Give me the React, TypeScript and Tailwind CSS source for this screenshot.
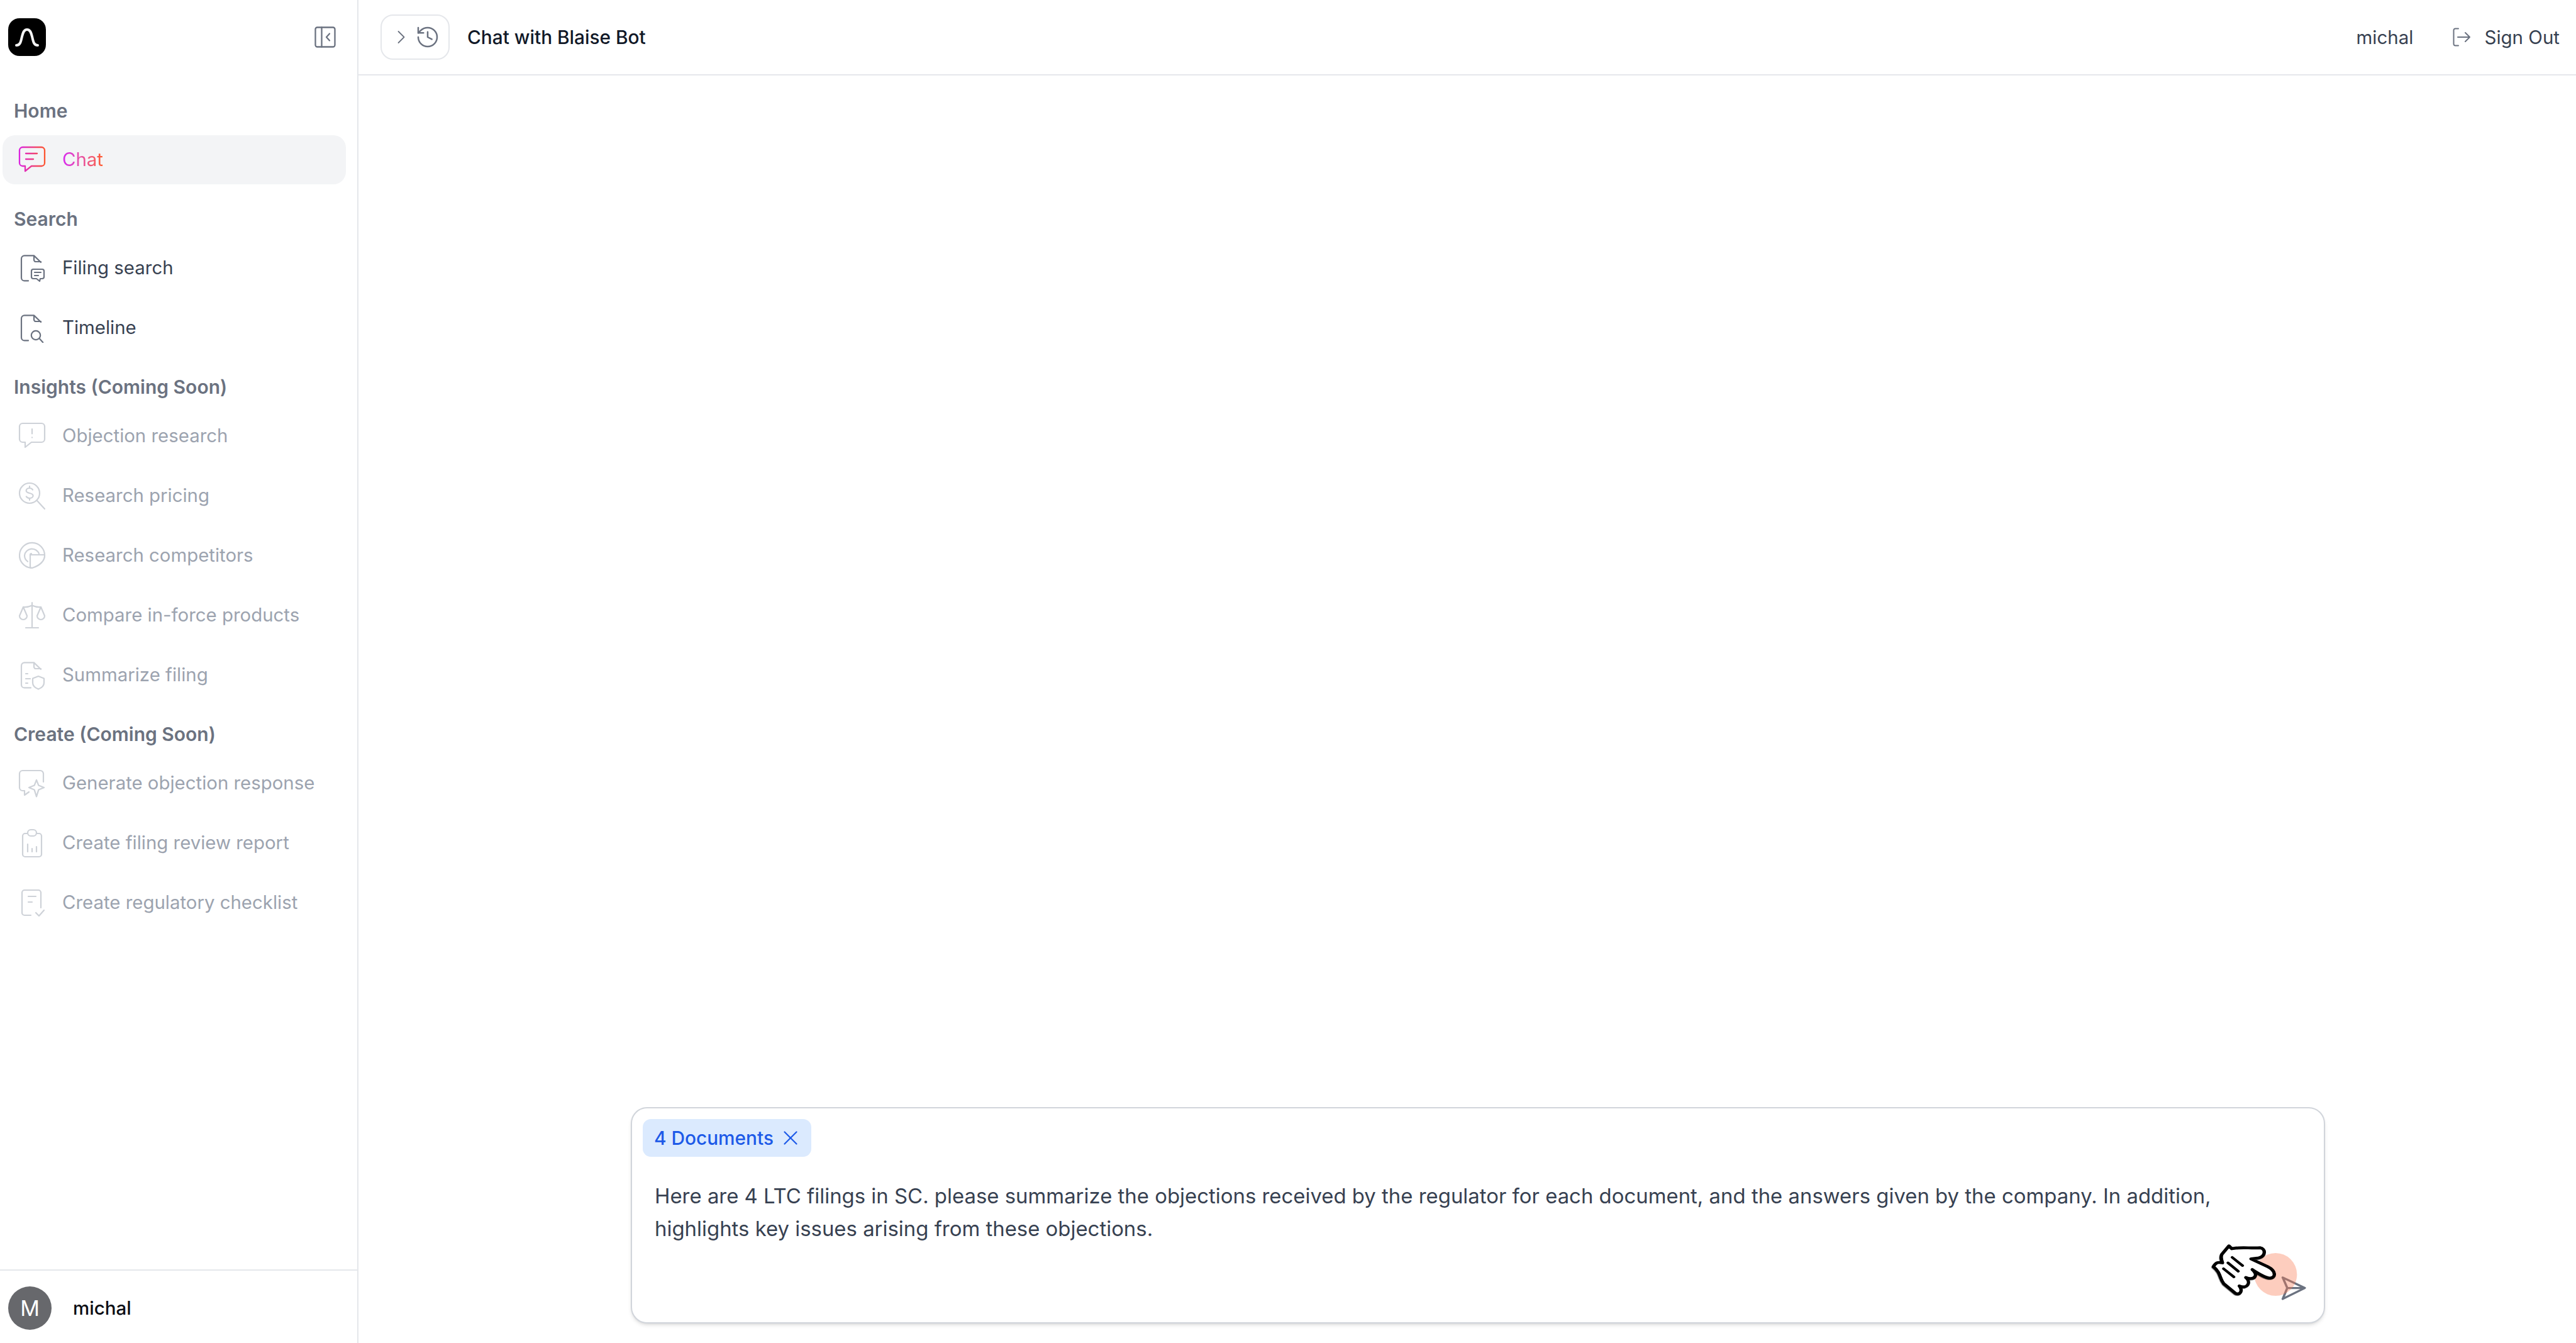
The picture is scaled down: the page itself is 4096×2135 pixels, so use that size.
import React from "react";
import { History, ChevronRight, X } from "lucide-react";

type IP = { children: React.ReactNode; cls?: string; sw?: number };
const Ico = ({ children, cls = "text-[#6b7280]", sw = 1.1 }: IP) => (
  <svg viewBox="0 0 24 24" fill="none" stroke="currentColor" strokeWidth={sw} strokeLinecap="round" strokeLinejoin="round" className={`w-[48px] h-[48px] shrink-0 ${cls}`}>
    {children}
  </svg>
);

const fold = "M13.5 2.2H6a2.5 2.5 0 0 0-2.5 2.5v15A2.5 2.5 0 0 0 6 22.2h3M13.5 2.2l5.5 5.3M13.500 2.2v3.300a1.500 1.500 0 0 0 1.500 1.500H19";
const FilingIcon = () => (
  <Ico>
    <path d={fold} />
    <path d="M13 13h7a1.500 1.500 0 0 1 1.500 1.500v4.500a1.500 1.500 0 0 1-1.500 1.500h-1.500l-.5 2-2.500-2H13a1.500 1.500 0 0 1-1.500-1.500v-4.500A1.500 1.500 0 0 1 13 13zM14 15.500h5M14 18h3" />
  </Ico>
);
const TimelineIcon = () => (
  <Ico>
    <path d={fold} />
    <circle cx="15" cy="18" r="3.600" />
    <path d="M18 20.800l2.600 2.800" />
  </Ico>
);
const D = "text-[#ced2d8]";
const ObjIcon = () => (
  <Ico cls={D}>
    <path d="M4.500 2h15A2.500 2.500 0 0 1 22 4.500v10a2.500 2.500 0 0 1-2.500 2.500h-8l-5 4v-4h-2A2.500 2.500 0 0 1 2 14.500v-10A2.500 2.500 0 0 1 4.500 2z" />
    <path d="M12 6.500v3.700M12 13.200v.1" />
  </Ico>
);
const PriceIcon = () => (
  <Ico cls={D}>
    <circle cx="10" cy="10" r="8" />
    <path d="M16 16l6 6.500M12.500 7.300c-.6-1-1.500-1.300-2.500-1.300-1.500 0-2.700.8-2.700 2 0 2.700 5.500 1.300 5.500 4 0 1.200-1.300 2-2.800 2-1 0-2-.4-2.600-1.300M10 4.500v1.500M10 14v1.500" />
  </Ico>
);
const CompIcon = () => (
  <Ico cls={D}>
    <path d="M22 12A10 10 0 1 0 11 21.900" />
    <path d="M17.500 10.500A6 6 0 0 0 6 12c0 2 1 3.800 2.500 4.800" />
    <path d="M10.500 11.500H22c.3 4.500-3.500 8.500-10 10.500l-1.500-.5zM10.500 11.500a1 1 0 0 1 1-1" />
  </Ico>
);
const ScaleIcon = () => (
  <Ico cls={D}>
    <path d="M12 2v20M7 22h10M5 5.500c2.500.3 4.800-.2 7-1.200 2.200 1 4.500 1.500 7 1.200" />
    <path d="M5 5.500L2 12.500a3 3 0 0 0 6 0zM19 5.500l-3 7a3 3 0 0 0 6 0z" />
  </Ico>
);
const SumIcon = () => (
  <Ico cls={D}>
    <path d="M13.500 2.200H6A2.500 2.500 0 0 0 3.500 4.700v15A2.500 2.500 0 0 0 6 22.200h5M13.500 2.200l5.500 5.300M13.500 2.200v3.300A1.500 1.500 0 0 0 15 7h4" />
    <path d="M7 11h1.500M7 15h3.500M7 18.500h1.500" />
    <path d="M17 13l4.500 1.800v3.500c0 2.500-2 4-4.500 5-2.500-1-4.500-2.500-4.500-5v-3.500z" />
  </Ico>
);
const GenIcon = () => (
  <Ico cls={D}>
    <path d="M21 11V4.500A2.500 2.500 0 0 0 18.500 2h-14A2.500 2.500 0 0 0 2 4.500v11A2.500 2.500 0 0 0 4.500 18H6v3.500l3.500-2.500" />
    <path d="M15.500 9.500l1.700 4.300 4.300 1.700-4.300 1.700-1.700 5.500-1.700-5.500-4.300-1.700 4.300-1.700z" />
  </Ico>
);
const ClipIcon = () => (
  <Ico cls={D}>
    <path d="M8 4.500H6.500A2 2 0 0 0 4.500 6.500V21a2 2 0 0 0 2 2h11a2 2 0 0 0 2-2V6.500a2 2 0 0 0-2-2H16" />
    <rect x="8.500" y="1.500" width="7" height="5" rx="2.500" />
    <path d="M8.500 13v6M12 16.500v2.500M15.500 15v4" />
  </Ico>
);
const CheckIcon = () => (
  <Ico cls={D}>
    <path d="M11 22H6a2 2 0 0 1-2-2V4a2 2 0 0 1 2-2h11a2 2 0 0 1 2 2v12" />
    <path d="M9 7h6M9 11.500h3M15 20l2.500 2.500 4-4.500" />
  </Ico>
);

const Label = ({ t }: { t: string }) => (
  <div className="mt-[29px] mb-[13px] h-[52px] pl-[22px] flex items-center text-[30px] font-semibold text-[#6b7280] whitespace-nowrap">{t}</div>
);
const Item = ({ icon, t, off }: { icon: React.ReactNode; t: string; off?: boolean }) => (
  <div className={`h-[78px] flex items-center pl-[27px] gap-[24px] text-[29.4px] whitespace-nowrap ${off ? "text-[#9ca3af]" : "text-[#374151]"}`}>
    {icon}
    <span>{t}</span>
  </div>
);

export default function App() {
  return (
    <div className="flex h-[2135px] w-full overflow-hidden bg-white font-['Inter',sans-serif]">
      <aside className="w-[570px] shrink-0 border-r-2 border-[#e5e7eb] flex flex-col">
        <div className="h-[121px] pb-[3px] flex items-center justify-between pl-[13px] pr-[34px]">
          <div className="w-[60px] h-[60px] rounded-[18px] bg-black flex items-center justify-center">
            <svg viewBox="0 0 60 60" className="w-[60px] h-[60px]" fill="none" stroke="#f5f5f5" strokeWidth="4" strokeLinecap="round">
              <path d="M13 43c6 0 7-5 9-14 2-8 4-11 8-11s6 3 8 11c2 9 3 14 9 14" />
            </svg>
          </div>
          <svg viewBox="0 0 34 34" fill="none" stroke="#6b7280" strokeWidth="2.300" strokeLinecap="round" strokeLinejoin="round" className="w-[34px] h-[34px]">
            <rect x="1.500" y="1.500" width="31" height="31" rx="3" />
            <path d="M11.500 1.500v31M24 11.500l-5 5.500 5 5.500" />
          </svg>
        </div>
        <nav className="flex-1 flex flex-col">
          <Label t="Home" />
          <div className="mx-[4px] w-[546px] h-[78px] rounded-[20px] bg-[#f3f4f6] flex items-center pl-[23px] gap-[24px] text-[29.4px]">
            <svg viewBox="0 0 24 24" fill="none" stroke="url(#cg)" strokeWidth="1.150" strokeLinecap="round" strokeLinejoin="round" className="w-[48px] h-[48px] shrink-0">
              <defs>
                <linearGradient id="cg" x1="0" y1="0" x2="24" y2="0" gradientUnits="userSpaceOnUse">
                  <stop offset="0" stopColor="#d81ff0" />
                  <stop offset="1" stopColor="#ff5a1f" />
                </linearGradient>
              </defs>
              <path d="M4.500 2h15A2.500 2.500 0 0 1 22 4.500v10a2.500 2.500 0 0 1-2.500 2.500h-8l-5 4v-4h-2A2.500 2.500 0 0 1 2 14.500v-10A2.500 2.500 0 0 1 4.500 2z" />
              <path d="M7 7h9M7 11.500h6" />
            </svg>
            <span className="bg-gradient-to-r from-[#d81ff0] to-[#ff5a1f] bg-clip-text text-transparent">Chat</span>
          </div>
          <Label t="Search" />
          <div className="flex flex-col gap-[17px]">
            <Item icon={<FilingIcon />} t="Filing search" />
            <Item icon={<TimelineIcon />} t="Timeline" />
          </div>
          <Label t="Insights (Coming Soon)" />
          <div className="flex flex-col gap-[17px]">
            <Item off icon={<ObjIcon />} t="Objection research" />
            <Item off icon={<PriceIcon />} t="Research pricing" />
            <Item off icon={<CompIcon />} t="Research competitors" />
            <Item off icon={<ScaleIcon />} t="Compare in-force products" />
            <Item off icon={<SumIcon />} t="Summarize filing" />
          </div>
          <Label t="Create (Coming Soon)" />
          <div className="flex flex-col gap-[17px]">
            <Item off icon={<GenIcon />} t="Generate objection response" />
            <Item off icon={<ClipIcon />} t="Create filing review report" />
            <Item off icon={<CheckIcon />} t="Create regulatory checklist" />
          </div>
        </nav>
        <div className="h-[117px] pt-[3px] border-t-2 border-[#e5e7eb] flex items-center pl-[13px] gap-[34px]">
          <div className="w-[69px] h-[69px] rounded-full bg-[#67686c] flex items-center justify-center text-white text-[34px]">M</div>
          <span className="text-[29.5px] font-medium text-[#0b0d14]">michal</span>
        </div>
      </aside>
      <main className="flex-1 flex flex-col min-w-0">
        <header className="h-[120px] shrink-0 border-b-2 border-[#e5e7eb] flex items-center pl-[35px] pr-[26px]">
          <div className="w-[110px] h-[72px] rounded-[20px] border-2 border-[#e5e7eb] flex items-center justify-center gap-[4px] text-[#6b7280]">
            <ChevronRight className="w-[36px] h-[36px]" strokeWidth={1.200} />
            <History className="w-[40px] h-[40px]" strokeWidth={1.500} />
          </div>
          <span className="ml-[28px] text-[29.8px] font-medium text-[#111827]">Chat with Blaise Bot</span>
          <div className="ml-auto flex items-center text-[29.5px] text-[#374151]">
            <span>michal</span>
            <svg viewBox="0 0 28 30" fill="none" stroke="#6b7280" strokeWidth="2" strokeLinecap="round" strokeLinejoin="round" className="ml-[63px] w-[28px] h-[30px]">
              <path d="M9 1.500H4A2.500 2.500 0 0 0 1.500 4v22A2.500 2.500 0 0 0 4 28.500h5M8 15h19M20 8l7 7-7 7" />
            </svg>
            <span className="ml-[22px]">Sign Out</span>
          </div>
        </header>
        <div className="flex-1 flex flex-col justify-end pb-[31px] pl-[433px]">
          <div className="relative w-[2694px] h-[344px] rounded-[26px] border-2 border-[#d1d5db] bg-white shadow-md">
            <div className="absolute left-0 top-0 w-full pt-[17px] pl-[17px]">
              <div className="w-[268px] h-[60px] rounded-[13px] bg-[#dbeafe] flex items-center pl-[18px] gap-[8px] text-[29.8px] font-medium text-[#1d5ae8] whitespace-nowrap">
                <span>4 Documents</span>
                <X className="w-[38px] h-[38px]" strokeWidth={1.400} />
              </div>
              <p className="mt-[36px] ml-[19px] text-[32.9px] leading-[52px] text-[#374151] whitespace-nowrap">
                Here are 4 LTC filings in SC. please summarize the objections received by the regulator for each document, and the answers given by the company. In addition,
                <br />
                highlights key issues arising from these objections.
              </p>
            </div>
            <svg viewBox="0 0 1568 1371" preserveAspectRatio="none" className="absolute left-[2395px] top-[128px] w-[323px] h-[246px] pointer-events-none overflow-visible">
              <path d="M1115 785L1285 878 1115 975 1150 878zM1150 878H1285" fill="none" stroke="#6b7280" strokeWidth="18" strokeLinejoin="round" />
              <ellipse cx="1060" cy="758" rx="165" ry="190" fill="#fb7c55" fillOpacity="0.38" />
              <g className="drop-shadow-[-3px_5px_3px_rgba(0,0,0,0.55)]">
                <path
                  d="M700 505L722 530C790 512 860 528 940 522C985 530 985 595 930 612L870 620L1000 690C1060 725 1070 790 1010 790C975 785 920 745 880 715C930 760 900 815 830 785C875 830 840 890 780 860C810 900 785 945 750 925L660 840C625 790 640 745 580 690C600 645 620 650 650 655C640 625 635 605 645 580Z"
                  fill="#fff"
                  stroke="#000"
                  strokeWidth="26"
                  strokeLinejoin="round"
                  strokeLinecap="round"
                />
                <path d="M725 607L805 680M692 655L772 730M658 707L738 780" stroke="#000" strokeWidth="22" strokeLinecap="round" fill="none" />
              </g>
            </svg>
          </div>
        </div>
      </main>
    </div>
  );
}
